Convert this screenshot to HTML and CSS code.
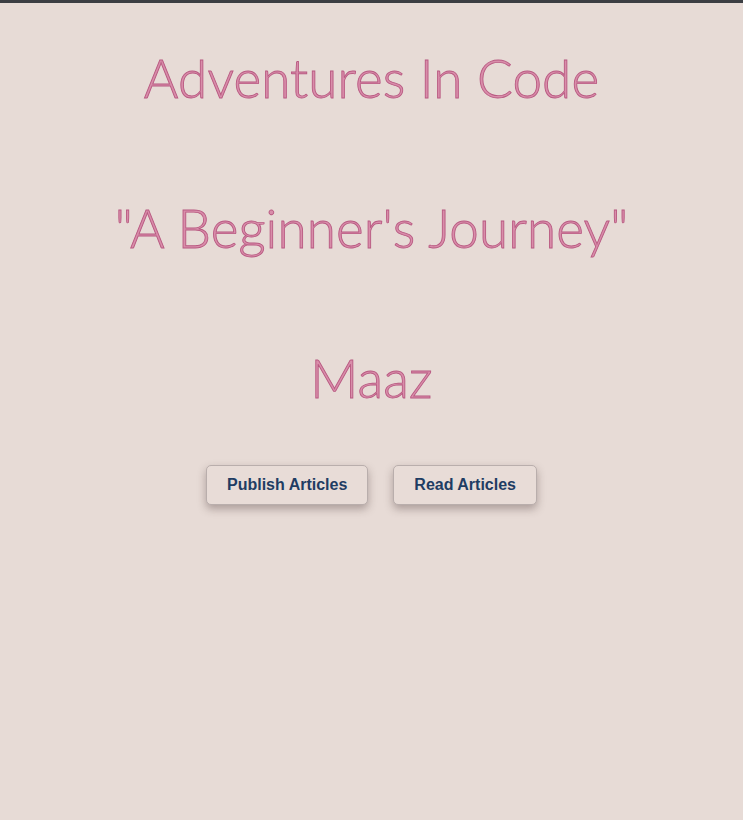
FILE: index.html
```html
<!DOCTYPE html>
<html lang="en">
<head>
<meta charset="utf-8">
<title>Adventures In Code</title>
<link rel="stylesheet" href="styles.css">
</head>
<body>
<div class="topbar"></div>
<main class="hero">
  <h1 class="line">Adventures In Code</h1>
  <h2 class="line">"A Beginner's Journey"</h2>
  <h2 class="line">Maaz</h2>
  <div class="actions">
    <button class="btn btn-publish">Publish Articles</button>
    <button class="btn btn-read">Read Articles</button>
  </div>
</main>
</body>
</html>
```
FILE: styles.css
```css
html, body {
  margin: 0;
  padding: 0;
  background: #e7dbd6;
  height: 100%;
}
.topbar {
  height: 3px;
  background: #3c3e43;
}
.hero {
  text-align: center;
}
.line {
  margin: 0;
  font-family: "Lato", "Noto Sans", sans-serif;
  font-weight: 300;
  font-size: 53px;
  line-height: 150px;
  color: #d98daa;
  -webkit-text-stroke: 0.9px #b95a82;
  letter-spacing: 0.1px;
}
.actions {
  display: flex;
  justify-content: center;
  gap: 25px;
  margin-top: 12px;
}
.btn {
  font-family: "Liberation Sans", Arial, sans-serif;
  font-weight: bold;
  font-size: 16px;
  color: #1f3d63;
  background: #e8dcd7;
  border: 1px solid #b9aeac;
  border-radius: 5px;
  height: 40px;
  padding: 0 20px;
  box-shadow: 0 4px 8px rgba(60, 40, 40, 0.35);
}
```
